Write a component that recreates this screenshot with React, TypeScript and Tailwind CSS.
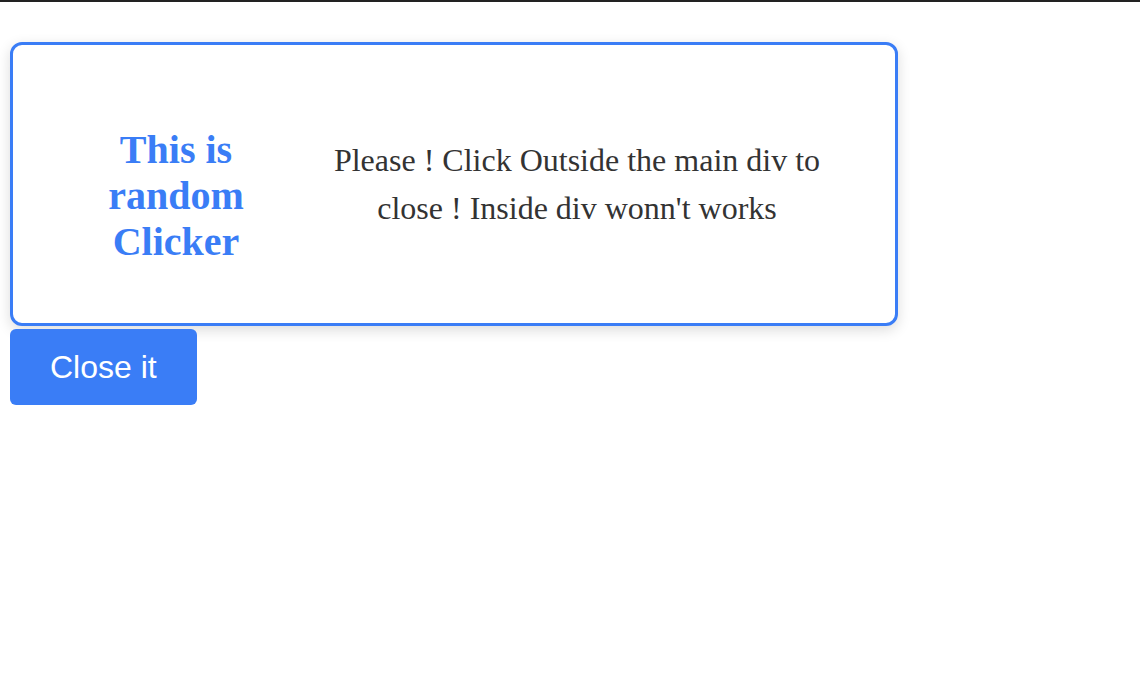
export default function App() {
  return (
    <div className="min-h-screen bg-white">
      <div className="h-[2px] w-full bg-[#222]" />
      <div className="ml-[10px] mt-[40px] flex flex-col items-start gap-[3px]">
        <div className="flex h-[284px] w-[888px] items-center gap-[41px] rounded-xl border-[3px] border-[#3a7df6] bg-white pl-[63px] shadow-[0_4px_14px_rgba(0,0,0,0.14)]">
          <h1 className="mt-[24px] w-[200px] text-center font-['Liberation_Serif',serif] text-[40px] font-bold leading-[1.15] text-[#3a7df6]">
            This is random Clicker
          </h1>
          <p className="w-[520px] text-center font-['Liberation_Serif',serif] text-[32px] leading-[48px] text-[#333]">
            Please ! Click Outside the main div to close ! Inside div wonn't works
          </p>
        </div>
        <button className="rounded-md bg-[#3a7df6] px-10 py-5 font-['Liberation_Sans',Arial,sans-serif] text-[32px] leading-[36px] text-white">
          Close it
        </button>
      </div>
    </div>
  );
}
